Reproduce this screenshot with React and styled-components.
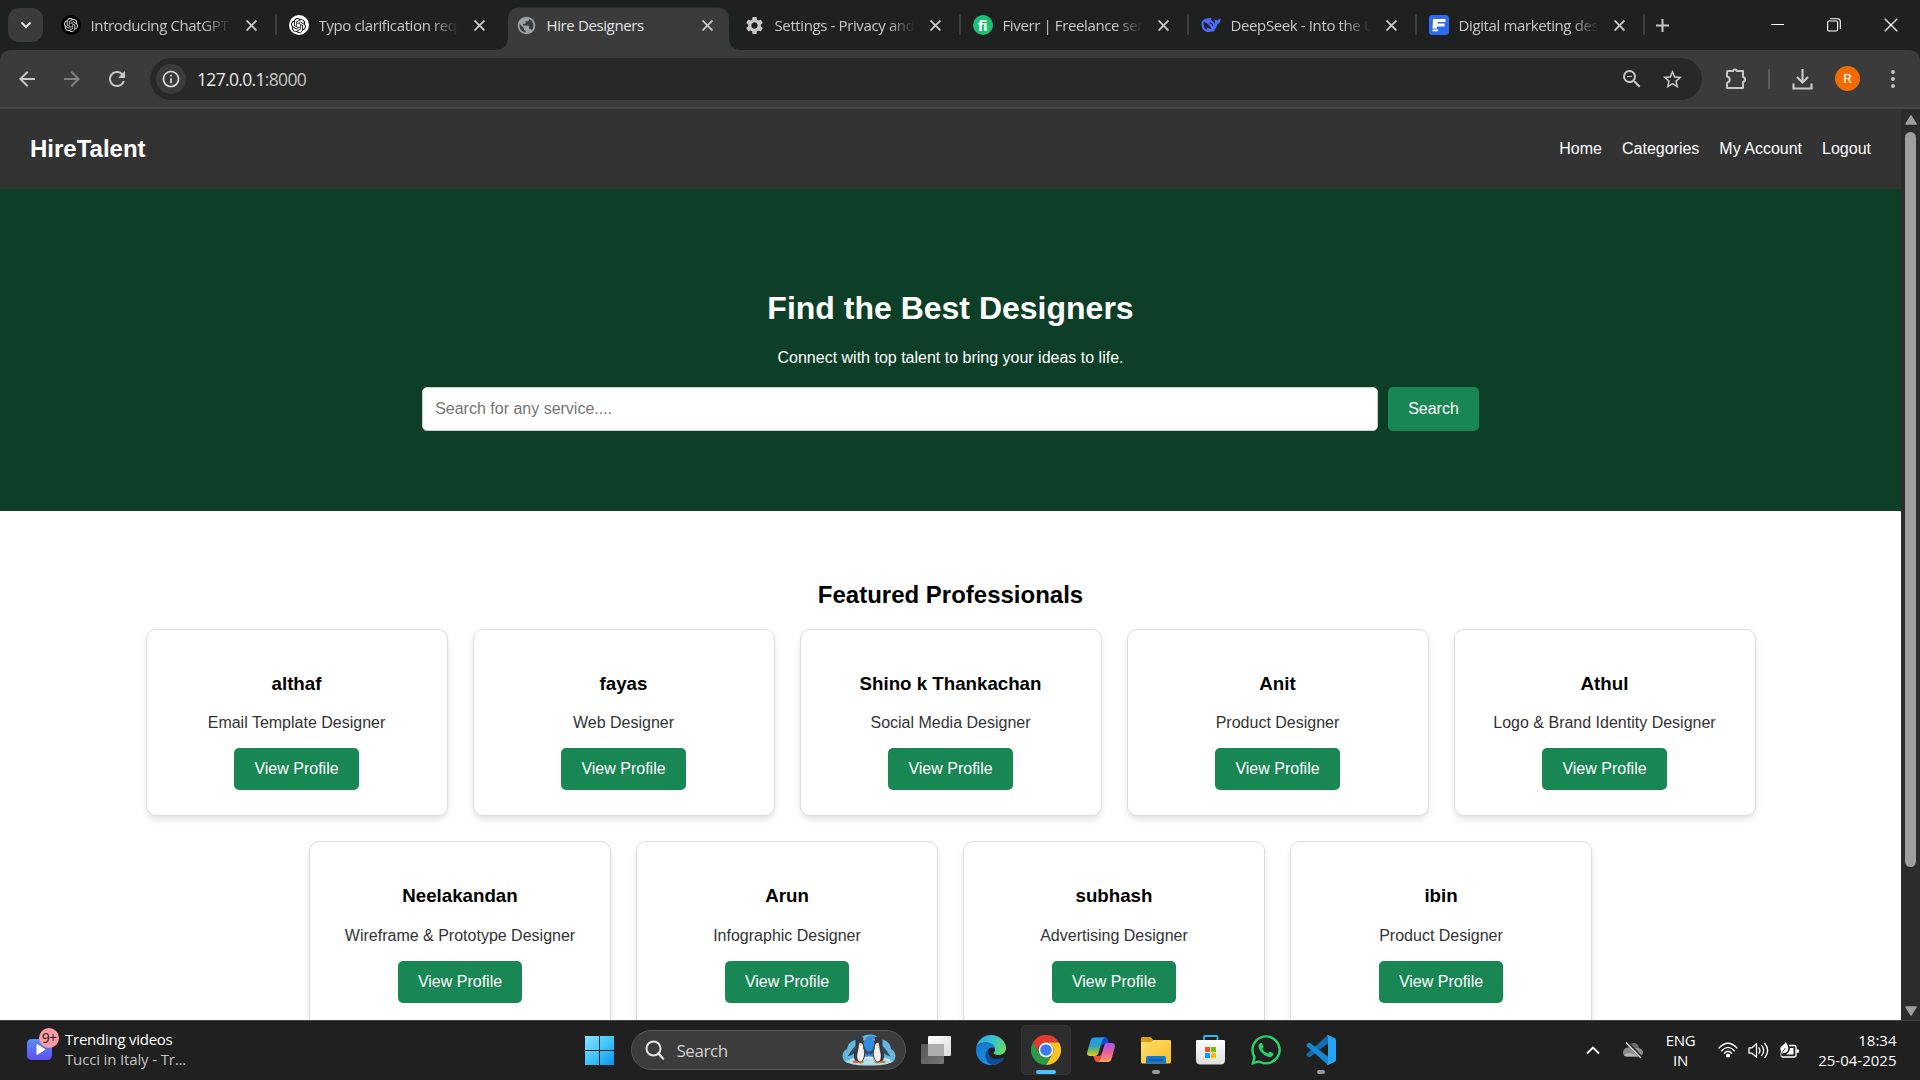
import React from 'react';
import styled, { createGlobalStyle } from 'styled-components';
import {
  MdArrowBack, MdArrowForward, MdRefresh, MdInfoOutline, MdZoomOut, MdStarBorder,
  MdSettings, MdPublic,
} from 'react-icons/md';
import { SiOpenai } from 'react-icons/si';
import { FaWhatsapp } from 'react-icons/fa';

const GlobalStyle = createGlobalStyle`
  *, *::before, *::after { box-sizing: border-box; }
  body { margin: 0; background: #fff; overflow: hidden; font-family: "Liberation Sans", Arial, sans-serif; }
  svg { display: block; flex: none; }
`;

const uiFont = '"Open Sans", "Noto Sans", sans-serif';

const Screen = styled.div`
  width: 1920px;
  height: 1080px;
  display: flex;
  flex-direction: column;
  overflow: hidden;
`;

/* ---------- browser chrome ---------- */
const TabStrip = styled.div`
  height: 50px;
  flex: none;
  display: flex;
  background: #1f2120;
  font-family: ${uiFont};
`;
const TabSearch = styled.div`
  width: 35px;
  height: 34px;
  margin: 8px 4.500px 0 8px;
  border-radius: 11px;
  background: #3b3b3b;
  display: grid;
  place-items: center;
`;
const Tab = styled.div`
  position: relative;
  width: 228px;
  height: 50px;
  flex: none;
  display: flex;
  align-items: center;
  padding-left: 12.5px;
  color: ${(p) => (p.$active ? '#e3e3e3' : '#c7c7c7')};
`;
const TabShape = styled.svg`
  position: absolute;
  left: -9.5px;
  top: 7px;
`;
const TabDivider = styled.span`
  position: absolute;
  right: -1px;
  top: 14px;
  width: 2px;
  height: 21px;
  border-radius: 1px;
  background: #3f4140;
`;
const Favicon = styled.span`
  position: relative;
  width: 21px;
  height: 20px;
  display: grid;
  place-items: center;
`;
const Disc = styled.span`
  width: 20px;
  height: 20px;
  border-radius: 50%;
  background: ${(p) => p.$bg};
  color: ${(p) => p.$fg};
  display: grid;
  place-items: center;
  font-size: 15px;
  font-weight: 700;
  line-height: 20px;
  letter-spacing: -0.5px;
`;
const TabTitle = styled.span`
  position: relative;
  width: 142px;
  margin-left: 9.5px;
  font-size: 15px;
  line-height: 24px;
  letter-spacing: -0.38px;
  white-space: nowrap;
  -webkit-mask-image: ${(p) => (p.$fade ? 'linear-gradient(90deg, #000 112px, transparent 140px)' : 'none')};
`;
const TabClose = styled.span`
  position: relative;
  margin-left: 13px;
`;
const NewTab = styled.div`
  width: 38px;
  display: grid;
  place-items: center;
`;
const WindowButtons = styled.div`
  margin-left: auto;
  height: 49px;
  display: grid;
  grid-template-columns: 57px 56px 58px;
  align-items: center;
  justify-items: center;
`;
const ToolbarBack = styled.div`
  flex: none;
  background: #1f2120;
`;
const Toolbar = styled.div`
  height: 59px;
  display: flex;
  align-items: center;
  padding: 0 0 0 15px;
  background: #3b3b3b;
  border-bottom: 2px solid #474747;
  border-radius: 10px 10px 0 0;
  color: #c7c7c7;
  font-family: ${uiFont};
`;
const NavIcon = styled.span`
  width: 45px;
  height: 24px;
  display: flex;
  align-items: center;
  opacity: ${(p) => (p.$dim ? 0.5 : 1)};
`;
const Omnibox = styled.div`
  width: 1552px;
  height: 42px;
  padding: 1px 18px 0 6px;
  border-radius: 21px;
  background: #282828;
  display: flex;
  align-items: center;
`;
const SiteInfo = styled.span`
  width: 30px;
  height: 30px;
  border-radius: 50%;
  background: #3b3b3b;
  color: #dedede;
  display: grid;
  place-items: center;
`;
const Url = styled.span`
  margin-left: 11px;
  color: #e8e8e8;
  font-size: 17.5px;
  letter-spacing: -0.67px;
  flex: 1;
  span { color: #c4c4c4; }
`;
const OmniActions = styled.span`
  display: flex;
  gap: 17px;
  align-items: center;
`;
const ToolActions = styled.div`
  display: flex;
  align-items: center;
  padding-left: 23px;
`;
const ToolDivider = styled.span`
  width: 2px;
  height: 20px;
  margin: 0 22px 0 20px;
  border-radius: 1px;
  background: #5e5e5e;
`;
const Avatar = styled.span`
  width: 25px;
  height: 25px;
  margin: 0 31px 0 22px;
  border-radius: 50%;
  background: #f06c00;
  color: #fff;
  display: grid;
  place-items: center;
  font: 13.5px/25px Roboto, sans-serif;
`;

/* ---------- web page ---------- */
const Viewport = styled.div`
  height: 911px;
  flex: none;
  display: grid;
  grid-template-columns: 1901px 19px;
  overflow: hidden;
`;
const Page = styled.div`
  height: 911px;
  overflow: hidden;
  background: #fff;
  font-size: 16px;
`;
const Navbar = styled.nav`
  height: 80px;
  padding: 0 30px;
  background: #333;
  color: #fff;
  display: flex;
  align-items: center;
  justify-content: space-between;
`;
const Brand = styled.div`
  font-size: 24px;
  font-weight: 700;
  line-height: 28px;
`;
const Links = styled.div`
  display: flex;
  gap: 20px;
  line-height: 18px;
`;
const Hero = styled.header`
  height: 322px;
  padding: 101px 20px 80px;
  background: #0d3f28;
  color: #fff;
  text-align: center;
`;
const HeroTitle = styled.h1`
  margin: 0 0 22px;
  font-size: 32px;
  line-height: 37px;
`;
const HeroText = styled.p`
  margin: 0 0 20px;
  line-height: 18px;
`;
const SearchForm = styled.div`
  display: flex;
  justify-content: center;
  gap: 10px;
`;
const SearchInput = styled.input`
  width: 956px;
  height: 44px;
  padding: 0 12px;
  border: 1px solid #ccc;
  border-radius: 5px;
  background: #fff;
  font: 16px/18px "Liberation Sans", Arial, sans-serif;
  &::placeholder { color: #757575; }
`;
const GreenButton = styled.button`
  height: ${(p) => p.$height || 42}px;
  padding: 0 20px;
  border: 0;
  border-radius: 5px;
  background: #198754;
  color: #fff;
  font: 16px/18px "Liberation Sans", Arial, sans-serif;
`;
const Featured = styled.section`
  padding-top: 70px;
  text-align: center;
`;
const FeaturedTitle = styled.h2`
  margin: 0 0 20px;
  font-size: 24px;
  line-height: 28px;
`;
const CardGrid = styled.div`
  width: 1660px;
  margin: 0 auto;
  display: flex;
  flex-wrap: wrap;
  justify-content: center;
  gap: 25px;
`;
const Card = styled.article`
  width: 302px;
  height: 187.4px;
  padding: 43px 25px 25px;
  border: 1px solid #ddd;
  border-radius: 10px;
  box-shadow: 0 4px 6px rgba(0, 0, 0, 0.1);
  background: #fff;
`;
const CardName = styled.h3`
  margin: 0 0 20.2px;
  font-size: 18.72px;
  line-height: 21px;
`;
const CardRole = styled.p`
  margin: 0 -10px 16px;
  color: #333;
  line-height: 18px;
`;
const Scrollbar = styled.div`
  height: 911px;
  background: #2c2c2c;
  display: flex;
  flex-direction: column;
  align-items: center;
  padding: 6px 0 4px;
`;
const Thumb = styled.div`
  width: 11px;
  height: 735px;
  margin: 7px 0 auto;
  border-radius: 6px;
  background: #9f9f9f;
`;

/* ---------- taskbar ---------- */
const Taskbar = styled.footer`
  height: 60px;
  flex: none;
  display: flex;
  align-items: center;
  padding-bottom: 1px;
  background: #202020;
  border-top: 1px solid #424242;
  color: #fff;
  font-family: ${uiFont};
  font-size: 15px;
  line-height: 20px;
  letter-spacing: -0.3px;
`;
const Widget = styled.div`
  width: 572px;
  flex: none;
  padding-left: 27px;
  display: flex;
  align-items: center;
  gap: 6px;
`;
const WidgetIcon = styled.div`
  position: relative;
  width: 32px;
  height: 40px;
  padding-top: 9px;
`;
const Badge = styled.span`
  position: absolute;
  left: 12px;
  top: -2px;
  width: 20px;
  height: 20px;
  border-radius: 50%;
  background: #ff9aa2;
  color: #1c1c1c;
  font-size: 14px;
  line-height: 20px;
  text-align: center;
  letter-spacing: -0.8px;
`;
const WidgetText = styled.div`
  padding-bottom: 2px;
  font-size: 15px;
  letter-spacing: -0.25px;
  div + div { color: #c4c4c4; letter-spacing: -0.15px; }
`;
const SearchPill = styled.div`
  width: 275px;
  height: 40px;
  flex: none;
  margin: 0 2px 0 4px;
  padding: 0 9px 0 13px;
  border: 1px solid #565656;
  border-radius: 20px;
  background: #3c3c3c;
  display: flex;
  align-items: center;
  font-size: 17px;
  color: #d2d2d2;
  span { flex: 1; margin-left: 11.5px; padding-top: 1px; letter-spacing: -0.45px; }
`;
const AppSlot = styled.div`
  position: relative;
  width: 55px;
  height: 50px;
  flex: none;
  display: grid;
  place-items: center;
`;
const ActiveTile = styled.div`
  width: 50px;
  height: 50px;
  border: 1px solid #363636;
  border-radius: 5px;
  background: #2d2d2d;
  display: grid;
  place-items: center;
`;
const Indicator = styled.span`
  position: absolute;
  bottom: 1px;
  left: 50%;
  width: ${(p) => (p.$active ? 20 : 8)}px;
  height: 4px;
  border-radius: 2px;
  transform: translateX(-50%);
  background: ${(p) => (p.$active ? '#4cc2ff' : '#9a9a9a')};
`;
const Tray = styled.div`
  margin-left: auto;
  padding-right: 23.5px;
  display: flex;
  align-items: center;
`;
const CloudSlot = styled.span`
  margin-left: 23px;
`;
const Language = styled.div`
  width: 34px;
  margin: 0 20px 0 21px;
  padding-bottom: 1px;
  text-align: center;
`;
const StatusIcons = styled.div`
  display: flex;
  gap: 10px;
`;
const Clock = styled.div`
  width: 80px;
  margin-left: 18px;
  padding-bottom: 1px;
  text-align: right;
  letter-spacing: 0;
  white-space: nowrap;
`;

/* ---------- icons ---------- */
const Cross = ({ size = 10, w = 2, color = '#c7c7c7' }) => (
  <svg width={size} height={size} viewBox="0 0 10 10"><path d="M.5 .5 9.5 9.5M9.5 .5 .5 9.5" stroke={color} strokeWidth={w} fill="none" /></svg>
);
const Whale = () => (
  <svg width="20" height="16" viewBox="0 0 20 16">
    <path fill="#4d6bfe" d="M.5 8C.2 4 3 1.400 7 1.300C8.500 1.300 9 .3 10.200 1.200C9.700 2 10 2.600 11 3.400C12.400 4.500 13.200 6 14 6.500C14.200 5 13.400 3.500 13.700 1.800C14.300 3 15.200 3.400 16 3.500C16.500 2.400 18 2.500 19.700 1.200C19.700 4 18.700 6.300 16.500 7C16 9.500 15 11.300 13.300 12.700C14 13.300 14 14 13 14.300C11.500 14.800 10.500 14.200 9.500 14.800C4.500 16 .8 12.500 .5 8Z" />
    <path fill="#1f2120" d="M2.500 5.200C5.500 5 8.800 8.500 11 12.300C8.500 12 7.600 10.500 6.500 10.600C5.700 11 6 12 5.500 12.400C3.500 11 2.300 8 2.500 5.200Z" />
    <path d="M8.500 6.200C10 5.800 11.500 7 11.600 8.800" stroke="#1f2120" strokeWidth="1.100" fill="none" />
  </svg>
);
const FreelancerF = () => (
  <svg width="20" height="20" viewBox="0 0 20 20">
    <rect width="20" height="20" rx="3" fill="#2f6bf0" />
    <path d="M4 4H16.500V7H8.500V8.500H15.500V11.500H8V13.500H3.500Z" fill="#fff" />
    <rect x="3.500" y="14.500" width="5.500" height="1.800" fill="#fff" />
  </svg>
);
const Puzzle = () => (
  <svg width="23" height="22" viewBox="0 0 23 22" fill="none" stroke="#c7c7c7" strokeWidth="2" strokeLinejoin="round">
    <path d="M3 3H8.200C8.200 .9 11.800 .9 11.800 3H18V9.200C20.800 9.200 20.800 13.800 18 13.800V20H2V14.800C5.600 14.400 5.600 8.800 2 8.400V4Q2 3 3 3Z" />
  </svg>
);
const Download = () => (
  <svg width="21" height="22" viewBox="0 0 21 22" fill="none" stroke="#c7c7c7" strokeWidth="2.200">
    <path d="M10.500 1V14M5 9 10.500 14.500 16 9M1.500 15.500V20.500H19.500V15.500" />
  </svg>
);
const Dots = () => (
  <svg width="4" height="18" viewBox="0 0 4 18" fill="#c7c7c7"><circle cx="2" cy="2" r="1.900" /><circle cx="2" cy="9" r="1.900" /><circle cx="2" cy="16" r="1.900" /></svg>
);
const Penguin = ({ flip }) => (
  <g transform={flip ? 'translate(54 0) scale(-1 1)' : undefined}>
    <path d="M13.500 9C13 4 16 1.800 19 2.500C22 3.300 22.500 6 21.500 9C22 12 23.500 16 23 21C22.500 26 20 28.500 17 28.500C13 28.500 11.500 25 12 19C12.300 15 14 12 13.500 9Z" fill="#2f3b4a" />
    <path d="M17.500 9.500C19.500 8.500 21 10 21 12C23 17 22.500 26 18.500 28C15 27.500 14.500 22 16 17C17 14 16.500 11 17.500 9.500Z" fill="#f3efe9" />
    <path d="M13.800 11.500C10 15 8 19 5.500 22.500C8.500 22 12 20 14 17Z" fill="#3a4858" />
    <path d="M21 11.500C23 15 25 17.500 27 18L26 21C23.500 20 21.500 17 21 13Z" fill="#3a4858" />
    <path d="M21 4.500 24.500 5.500 21 6.800Z" fill="#f28a2c" />
    <path d="M17.300 8.500Q19.500 8.500 20.500 11L18 12.500Z" fill="#f8cf7a" />
    <path d="M10.500 27.500Q14 25.500 16 27.500V29H11ZM17 27H21.500V28.500L19 29.500H17.500Z" fill="#e0683a" />
  </g>
);
const Penguins = () => (
  <svg width="54" height="32" viewBox="0 0 54 32">
    <path d="M5 29C-1 26-1 18 5 15C6 9 10 6 17 5C22-1 34-1 38 5C45 6 49 10 49 15C55 18 55 26 49 29Z" fill="#63b7dc" />
    <path d="M22 8C24-1 36 0 39 9L36 23H20Z" fill="#2f8be6" />
    <path d="M8 25Q27 20 48 25L46 30H9Z" fill="#e8e6f8" />
    <path d="M3 27Q27 22 51 27Q45 32 27 31.500Q9 32 3 27Z" fill="#aee0ea" />
    <Penguin /><Penguin flip />
  </svg>
);
const StartLogo = () => (
  <svg width="29" height="29" viewBox="0 0 29 29">
    <defs><linearGradient id="win" x1="0" y1="0" x2="29" y2="29" gradientUnits="userSpaceOnUse"><stop stopColor="#8ae2ff" /><stop offset=".5" stopColor="#41c5fa" /><stop offset="1" stopColor="#0a94f5" /></linearGradient></defs>
    <path fill="url(#win)" d="M0 0H14V14H0ZM15 0H29V14H15ZM0 15H14V29H0ZM15 15H29V29H15Z" />
  </svg>
);
const TaskView = () => (
  <svg width="30" height="28" viewBox="0 0 30 28">
    <defs>
      <linearGradient id="tva" x1="0" y1="0" x2="1" y2="1"><stop stopColor="#fff" /><stop offset="1" stopColor="#dcdcdc" /></linearGradient>
      <linearGradient id="tvb" x1="0" y1="0" x2="1" y2="1"><stop stopColor="#5a5a5a" /><stop offset="1" stopColor="#757575" /></linearGradient>
    </defs>
    <rect x="7" width="23" height="20" rx="1" fill="url(#tva)" />
    <rect y="8" width="23" height="20" rx="1" fill="url(#tvb)" />
    <path d="M7 8H23V20H7Z" fill="#aeaeae" />
  </svg>
);
const Edge = () => (
  <svg width="30" height="30" viewBox="0 0 30 30">
    <defs>
      <linearGradient id="eg" x1="2" y1="4" x2="30" y2="16" gradientUnits="userSpaceOnUse"><stop stopColor="#2fa8e8" /><stop offset=".5" stopColor="#36c6cf" /><stop offset="1" stopColor="#6ee04c" /></linearGradient>
      <linearGradient id="eb" x1="0" y1="8" x2="8" y2="30" gradientUnits="userSpaceOnUse"><stop stopColor="#1274c4" /><stop offset="1" stopColor="#1a90e8" /></linearGradient>
    </defs>
    <path fill="url(#eg)" d="M0 14C1 6 7 0 15 0C24 0 30 7 30 13C30 17.500 26.500 20 22.500 20C19.500 20 17.500 19.200 17.500 18C18.500 17 19 16 19 14.500C19 10 14 7.500 10 7.500C5 7.500 1 9.500 0 14Z" />
    <path fill="url(#eb)" d="M0 15C0 10 5 7.500 10 7.500C15 7.500 19 10 19 14.500C18 11.500 13 12 11.500 16C9.500 21 14 27 21 27C24 27 26.500 25.500 28 23.500C25 28 20 30 15 30C6 30 0 23 0 15Z" />
    <path fill="#114b98" d="M12.500 13.500C10.500 19 15 24 21 24C24 24 26 23 27.500 22.500Q28.500 22.500 27.800 23.800C25 28 21 30 16.500 30C9 28 7 19 12.500 13.500Z" />
  </svg>
);
const Chrome = () => (
  <svg width="30" height="30" viewBox="0 0 30 30">
    <path fill="#e33b2e" d="M2 7.500A15 15 0 0 1 28 7.500H15A7.500 7.500 0 0 0 8.500 18.750Z" />
    <path fill="#fcc31e" d="M28 7.500A15 15 0 0 1 15 30L21.500 18.750A7.500 7.500 0 0 0 15 7.500Z" />
    <path fill="#2c9a47" d="M2 7.500A15 15 0 0 0 15 30L21.500 18.750A7.500 7.500 0 0 1 8.500 18.750Z" />
    <circle cx="15" cy="15" r="7.400" fill="#fff" /><circle cx="15" cy="15" r="5.800" fill="#3a7cf0" />
  </svg>
);
const Copilot = () => (
  <svg width="28" height="26" viewBox="0 0 28 26">
    <defs>
      <linearGradient id="ca" x1="0" y1="0" x2="0" y2="1"><stop stopColor="#1ba0ee" /><stop offset=".45" stopColor="#2f9fc0" /><stop offset=".75" stopColor="#7fc04c" /><stop offset="1" stopColor="#f2c81c" /></linearGradient>
      <linearGradient id="cb" x1="0" y1="0" x2="0" y2="1"><stop stopColor="#a853ee" /><stop offset=".5" stopColor="#ec5d9c" /><stop offset="1" stopColor="#fba35a" /></linearGradient>
    </defs>
    <path d="M13 0H17.500Q20 0 21 3L22 7H18Q15 7 14 10Z" fill="#1747cc" />
    <path d="M6 19H12L15 17 13 23Q12 25 10.500 25Q8 25 7.500 22Z" fill="#ee5238" />
    <path d="M7 0.500H18Q16 1 15 4L11.500 16Q10.500 19 7.500 19H3Q-.7 19 .3 15L3.500 3.500Q4.500 .5 7 .5Z" fill="url(#ca)" />
    <path d="M20.500 6H25Q28.500 6 27.800 10L24.500 22Q23.500 25 21 25H10Q12.500 25 13.500 21.500L17 9Q18 6 20.500 6Z" fill="url(#cb)" />
  </svg>
);
const Folder = () => (
  <svg width="30" height="27" viewBox="0 0 30 27">
    <defs><linearGradient id="fo" x1="0" y1="0" x2="1" y2="1"><stop stopColor="#ffdf70" /><stop offset="1" stopColor="#f9bd26" /></linearGradient></defs>
    <path d="M0 1.500Q0 0 1.500 0H9.500L12.500 3H28Q29 3 29 4V9H0Z" fill="#dc9c0c" />
    <path d="M0 5H10L13 3H29Q30 3 30 4V25Q30 26.500 28.500 26.500H1.500Q0 26.500 0 25Z" fill="url(#fo)" />
    <path d="M5 26.500V21Q5 19 7 19H23Q25 19 25 21V26.500Z" fill="#1478cd" />
    <path d="M8 23H22" stroke="#0a4f93" strokeWidth="1.300" />
  </svg>
);
const Store = () => (
  <svg width="29" height="30" viewBox="0 0 29 30">
    <defs><linearGradient id="st" x1="0" y1="0" x2="0" y2="1"><stop stopColor="#fff" /><stop offset="1" stopColor="#dedede" /></linearGradient></defs>
    <path d="M8 7V2Q8 1 9 1H20.500Q21.500 1 21.500 2V7" stroke="#2fb7ee" strokeWidth="1.800" fill="none" />
    <path d="M0 6Q0 5 1 5H28Q29 5 29 6V25Q29 29.500 24.500 29.500H4.500Q0 29.500 0 25Z" fill="url(#st)" />
    <path fill="#f05125" d="M9 12H14V17H9Z" /><path fill="#7eba02" d="M15 12H20V17H15Z" />
    <path fill="#05a3ef" d="M9 18H14V23H9Z" /><path fill="#ffb901" d="M15 18H20V23H15Z" />
  </svg>
);
const Code = () => (
  <svg width="30" height="30" viewBox="0 0 30 30">
    <path d="M22 0 .8 18.800Q0 19.700 .8 20.500L2.300 22Q3.200 22.600 4 22L22 8.200Z" fill="#0f6fb2" />
    <path d="M22 30 .8 11.200Q0 10.300 .8 9.500L2.300 8Q3.200 7.400 4 8L22 21.800Z" fill="#1488d2" />
    <path d="M22 0 29 3.300Q30 3.800 30 5V25Q30 26.200 29 26.700L22 30Q21 30 20.500 29.300Q22 29.500 22 27.500V2.500Q22 .5 20.500 .7Z" fill="#26a4f3" />
  </svg>
);
const CloudOff = () => (
  <svg width="20" height="17" viewBox="0 0 20 17">
    <path d="M5 5Q7 1 11 1Q15 1 16 6L10 9Z" fill="#6c6c6c" />
    <path d="M4 14.500Q0 14 0 10Q.5 5.500 5.500 5.500L16 6Q20 7 20 10.500Q19.500 14.500 16 14.500Z" fill="#8b8b8b" />
    <path d="M1 14 Q4 8 16 14.500H4Z" fill="#b4b4b4" />
    <path d="M4 .5 19 16" stroke="#202020" strokeWidth="3" /><path d="M3 .5 18 16" stroke="#eee" strokeWidth="1.300" />
  </svg>
);
const Wifi = () => (
  <svg width="20" height="16" viewBox="0 0 20 16" fill="none" stroke="#fff" strokeWidth="1.400" strokeLinecap="round">
    <path d="M1 6Q10-3.500 19 6M3.700 8.800Q10 2 16.300 8.800M6.400 11.300Q10 7.300 13.600 11.300" /><circle cx="10" cy="13.500" r="1.400" fill="#fff" />
  </svg>
);
const Speaker = () => (
  <svg width="21" height="17" viewBox="0 0 21 17" fill="none" stroke="#fff" strokeWidth="1.300" strokeLinecap="round" strokeLinejoin="round">
    <path d="M1 5.800H4L8.500 1.800V15.200L4 11.200H1ZM11 5.800Q13 8.500 11 11.200M13.800 3.600Q17.500 8.500 13.800 13.400M16.800 1.500Q22.500 8.500 16.800 15.500" />
  </svg>
);
const Battery = () => (
  <svg width="20" height="17" viewBox="0 0 20 17">
    <path d="M10 3.500H15Q17 3.500 17 5.500V13Q17 15 15 15H4Q2.500 15 2 13.500" stroke="#fff" strokeWidth="1.400" fill="none" />
    <path d="M17.500 7H18.500Q20 7 20 8.500V9.500Q20 11 18.500 11H17.500ZM11 6H14.500V12.500H7Q10.500 10.500 11 6Z" fill="#fff" />
    <path d="M6.500 0Q10 4 9 8Q8 11 4.500 11L1 13 2 9.500Q0 5 4 3Q6 2 6.500 0Z" fill="#fff" />
    <path d="M2 12 6.500 6" stroke="#202020" strokeWidth=".8" />
  </svg>
);

/* ---------- data ---------- */
const tabs = [
  { title: 'Introducing ChatGPT', fade: true, divider: true, icon: <Disc $bg="#000" $fg="#e5e5e5"><SiOpenai size={14} /></Disc> },
  { title: 'Typo clarification requ', fade: true, icon: <Disc $bg="#fff" $fg="#111"><SiOpenai size={15} /></Disc> },
  { title: 'Hire Designers', active: true, icon: <MdPublic size={21} color="#9aa0a6" /> },
  { title: 'Settings - Privacy and', fade: true, divider: true, icon: <MdSettings size={21} color="#c7c7c7" /> },
  { title: 'Fiverr | Freelance serv', fade: true, divider: true, icon: <Disc $bg="#1dbf73" $fg="#fff">fi</Disc> },
  { title: 'DeepSeek - Into the U', fade: true, divider: true, icon: <Whale /> },
  { title: 'Digital marketing des', fade: true, divider: true, icon: <FreelancerF /> },
];
const people = [
  ['althaf', 'Email Template Designer'],
  ['fayas', 'Web Designer'],
  ['Shino k Thankachan', 'Social Media Designer'],
  ['Anit', 'Product Designer'],
  ['Athul', 'Logo & Brand Identity Designer'],
  ['Neelakandan', 'Wireframe & Prototype Designer'],
  ['Arun', 'Infographic Designer'],
  ['subhash', 'Advertising Designer'],
  ['ibin', 'Product Designer'],
];

function BrowserTab({ tab }) {
  return (
    <Tab $active={tab.active}>
      {tab.active && (
        <TabShape width="248" height="43" viewBox="0 0 248 43">
          <path fill="#3b3b3b" d="M0 43Q14 43 14 30V13Q14 .5 26 .5H223Q235 .5 235 13V30Q235 43 248 43Z" />
        </TabShape>
      )}
      <Favicon>{tab.icon}</Favicon>
      <TabTitle $fade={tab.fade}>{tab.title}</TabTitle>
      <TabClose><Cross size={11} w={1.7} /></TabClose>
      {tab.divider && <TabDivider />}
    </Tab>
  );
}

export default function App() {
  return (
    <Screen>
      <GlobalStyle />
      <TabStrip>
        <TabSearch>
          <svg width="12" height="8" viewBox="0 0 12 8"><path d="M1.500 1.500 6 6 10.500 1.500" fill="none" stroke="#e3e3e3" strokeWidth="2" /></svg>
        </TabSearch>
        {tabs.map((t) => <BrowserTab key={t.title} tab={t} />)}
        <NewTab>
          <svg width="13" height="13" viewBox="0 0 13 13"><path d="M6.500 0V13M0 6.500H13" stroke="#c7c7c7" strokeWidth="2" /></svg>
        </NewTab>
        <WindowButtons>
          <svg width="13" height="2"><path d="M0 .5H13" stroke="#fff" strokeWidth="1" /></svg>
          <svg width="14" height="14" viewBox="0 0 14 14" fill="none" stroke="#fff" strokeWidth="1.100"><rect x=".6" y="3" width="10" height="10" rx="1.500" /><path d="M3 .7H10.500Q13.300 .7 13.300 3.500V11" /></svg>
          <Cross size={14} w={0.9} color="#fff" />
        </WindowButtons>
      </TabStrip>
      <ToolbarBack>
        <Toolbar>
          <NavIcon><MdArrowBack size={24} /></NavIcon>
          <NavIcon $dim><MdArrowForward size={24} /></NavIcon>
          <NavIcon><MdRefresh size={24} /></NavIcon>
          <Omnibox>
            <SiteInfo><MdInfoOutline size={20} /></SiteInfo>
            <Url>127.0.0.1<span>:8000</span></Url>
            <OmniActions>
              <MdZoomOut size={24} /><MdStarBorder size={23} />
            </OmniActions>
          </Omnibox>
          <ToolActions>
            <Puzzle />
            <ToolDivider />
            <Download />
            <Avatar>R</Avatar>
            <Dots />
          </ToolActions>
        </Toolbar>
      </ToolbarBack>

      <Viewport>
        <Page>
          <Navbar>
            <Brand>HireTalent</Brand>
            <Links><span>Home</span><span>Categories</span><span>My Account</span><span>Logout</span></Links>
          </Navbar>
          <Hero>
            <HeroTitle>Find the Best Designers</HeroTitle>
            <HeroText>Connect with top talent to bring your ideas to life.</HeroText>
            <SearchForm>
              <SearchInput placeholder="Search for any service...." />
              <GreenButton $height={44}>Search</GreenButton>
            </SearchForm>
          </Hero>
          <Featured>
            <FeaturedTitle>Featured Professionals</FeaturedTitle>
            <CardGrid>
              {people.map(([name, role]) => (
                <Card key={name}>
                  <CardName>{name}</CardName>
                  <CardRole>{role}</CardRole>
                  <GreenButton>View Profile</GreenButton>
                </Card>
              ))}
            </CardGrid>
          </Featured>
        </Page>
        <Scrollbar>
          <svg width="12" height="10" viewBox="0 0 12 10"><path d="M6 1 11 9H1Z" fill="#9f9f9f" stroke="#9f9f9f" strokeWidth="1.500" strokeLinejoin="round" /></svg>
          <Thumb />
          <svg width="12" height="10" viewBox="0 0 12 10"><path d="M6 9 11 1H1Z" fill="#9f9f9f" stroke="#9f9f9f" strokeWidth="1.500" strokeLinejoin="round" /></svg>
        </Scrollbar>
      </Viewport>

      <Taskbar>
        <Widget>
          <WidgetIcon>
            <svg width="25" height="21" viewBox="0 0 25 21">
              <defs><linearGradient id="vid" x1="0" y1="0" x2="0" y2="1"><stop stopColor="#5b8df5" /><stop offset="1" stopColor="#5f50ee" /></linearGradient></defs>
              <rect width="25" height="21" rx="4.500" fill="url(#vid)" /><path d="M10 5.500 18 10.500 10 15.500Z" fill="#fff" stroke="#fff" strokeLinejoin="round" />
            </svg>
            <Badge>9+</Badge>
          </WidgetIcon>
          <WidgetText><div>Trending videos</div><div>Tucci in Italy - Tr...</div></WidgetText>
        </Widget>
        <AppSlot><StartLogo /></AppSlot>
        <SearchPill>
          <svg width="20" height="20" viewBox="0 0 20 20" fill="none" stroke="#e6e6e6" strokeWidth="2"><circle cx="8.500" cy="8.500" r="7" /><path d="M13.500 13.500 18 18.500" strokeLinecap="round" strokeWidth="2.400" /></svg>
          <span>Search</span>
          <Penguins />
        </SearchPill>
        <AppSlot><TaskView /></AppSlot>
        <AppSlot><Edge /></AppSlot>
        <AppSlot><ActiveTile><Chrome /></ActiveTile><Indicator $active /></AppSlot>
        <AppSlot><Copilot /></AppSlot>
        <AppSlot><Folder /><Indicator /></AppSlot>
        <AppSlot><Store /></AppSlot>
        <AppSlot><FaWhatsapp size={34} color="#25d366" /></AppSlot>
        <AppSlot><Code /><Indicator /></AppSlot>
        <Tray>
          <svg width="14" height="9" viewBox="0 0 14 9"><path d="M1 7.500 7 1.500 13 7.500" stroke="#fff" strokeWidth="1.800" fill="none" /></svg>
          <CloudSlot><CloudOff /></CloudSlot>
          <Language><div>ENG</div><div>IN</div></Language>
          <StatusIcons><Wifi /><Speaker /><Battery /></StatusIcons>
          <Clock><div>18:34</div><div>25-04-2025</div></Clock>
        </Tray>
      </Taskbar>
    </Screen>
  );
}
